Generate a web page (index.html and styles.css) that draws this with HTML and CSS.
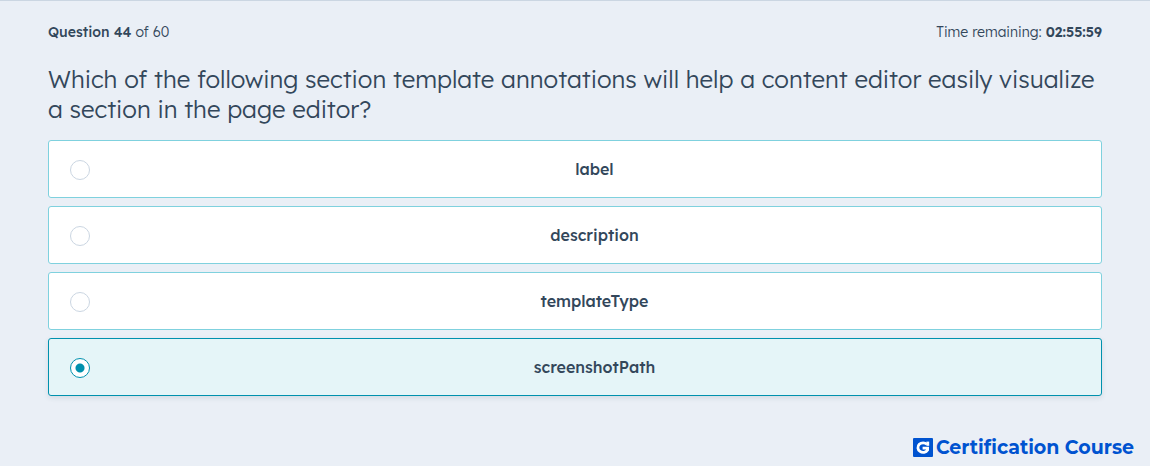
FILE: index.html
```html
<!DOCTYPE html>
<html lang="en">
<head>
    <meta charset="UTF-8">
    <meta name="viewport" content="width=device-width, initial-scale=1.0">
    <title>Certification Exam</title>
    <link rel="stylesheet" href="styles.css">
</head>
<body>
    <main class="exam">
        <div class="exam-status">
            <div class="progress"><strong>Question 44</strong> of 60</div>
            <div class="timer">Time remaining: <strong>02:55:59</strong></div>
        </div>

        <form>
            <fieldset class="question">
                <legend class="question-title">Which of the following section template annotations will help a content editor easily visualize a section in the page editor?</legend>

                <div class="answers">
                    <label class="answer">
                        <input type="radio" name="answer" value="label">
                        <span class="answer-text">label</span>
                    </label>
                    <label class="answer">
                        <input type="radio" name="answer" value="description">
                        <span class="answer-text">description</span>
                    </label>
                    <label class="answer">
                        <input type="radio" name="answer" value="templateType">
                        <span class="answer-text">templateType</span>
                    </label>
                    <label class="answer">
                        <input type="radio" name="answer" value="screenshotPath" checked>
                        <span class="answer-text">screenshotPath</span>
                    </label>
                </div>
            </fieldset>
        </form>
    </main>

    <footer class="brand">
        <svg class="brand-logo" viewBox="0 0 20 20" aria-hidden="true">
            <rect width="20" height="19" rx="1" fill="#0053d0"/>
            <path d="M14 6.4A5.2 4.8 0 1 0 14.6 12V10.2H9.6" fill="none" stroke="#fff" stroke-width="2.8"/>
            <path d="M13.4 3.6h2.8v4.2h-2.8z" fill="#fff"/>
        </svg>
        <span>Certification Course</span>
    </footer>
</body>
</html>
```

FILE: styles.css
```css
* {
    box-sizing: border-box;
}
body {
    margin: 0;
    background-color: #eaeff6;
    border-top: 1px solid #cbd6e2;
    color: #33475b;
    font-family: Lexend, Inter, sans-serif;
    font-size: 14px;
    font-weight: 300;
    line-height: 24px;
}
.exam {
    padding: 19px 48px 0;
}
.exam-status {
    display: flex;
    justify-content: space-between;
    margin-bottom: 20px;
}
.progress strong {
    font-weight: 500;
}
.timer strong {
    font-weight: 600;
}
.question {
    border: none;
    margin: 0;
    padding: 0;
    min-width: 0;
}
.question-title {
    padding: 0;
    margin-bottom: 16px;
    font-size: 24px;
    line-height: 30px;
}
.answers {
    display: grid;
    gap: 8px;
}
.answer {
    display: flex;
    align-items: center;
    gap: 19px;
    padding: 16px 21px;
    background-color: #fff;
    border: 1px solid #7fd1de;
    border-radius: 3px;
    cursor: pointer;
}
.answer:has(input:checked) {
    background-color: #e5f5f8;
    border-color: #0091ae;
    box-shadow: 0 2px 5px rgba(51, 71, 91, 0.12);
}
.answer input {
    appearance: none;
    flex: none;
    width: 20px;
    height: 20px;
    margin: 2px 0 0;
    background-color: #fff;
    border: 1px solid #cbd6e2;
    border-radius: 50%;
    cursor: pointer;
}
.answer input:checked {
    border-color: #0091ae;
    background-image: radial-gradient(circle, #0091ae 4px, transparent 5px);
}
.answer-text {
    flex: 1;
    text-align: center;
    font-size: 16px;
    font-weight: 500;
}
.brand {
    display: flex;
    justify-content: flex-end;
    align-items: center;
    gap: 3px;
    padding: 40px 16px 6px;
    color: #0053d0;
    font-family: Montserrat, Inter, sans-serif;
    font-size: 19px;
    font-weight: 700;
}
.brand-logo {
    width: 20px;
    height: 20px;
}
```
